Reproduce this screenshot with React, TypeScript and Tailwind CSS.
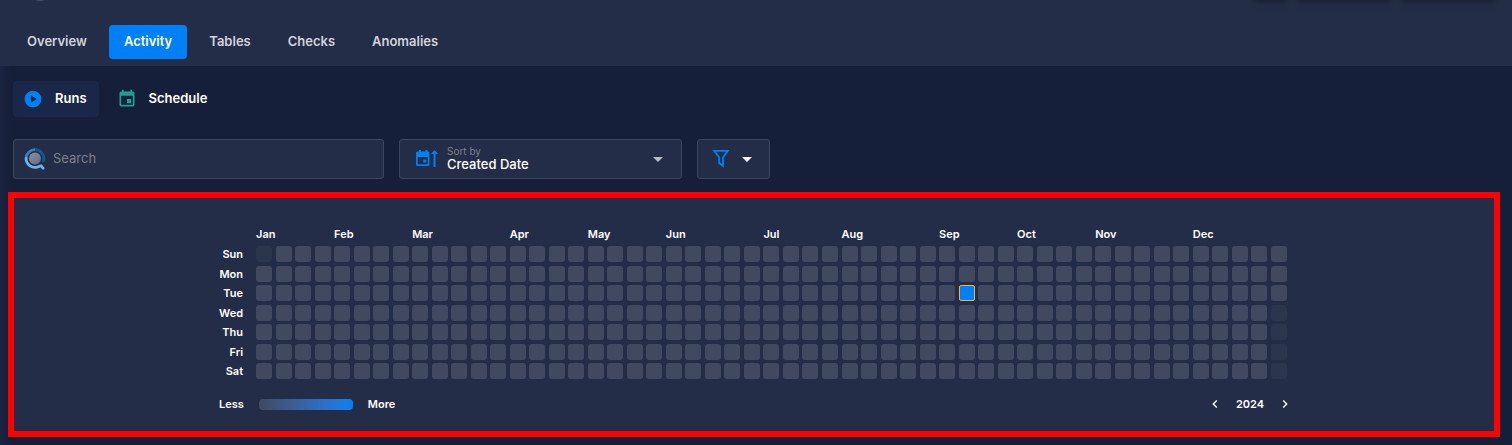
import { useState } from "react";
import type { ReactNode } from "react";
import { MdEvent, MdPlayCircle, MdArrowDropDown, MdChevronLeft, MdChevronRight } from "react-icons/md";

const tabs = ["Overview", "Activity", "Tables", "Checks", "Anomalies"];

const days = ["Sun", "Mon", "Tue", "Wed", "Thu", "Fri", "Sat"];

const months = [
  { name: "Jan", start: "col-start-1" },
  { name: "Feb", start: "col-start-5" },
  { name: "Mar", start: "col-start-9" },
  { name: "Apr", start: "col-start-14" },
  { name: "May", start: "col-start-18" },
  { name: "Jun", start: "col-start-22" },
  { name: "Jul", start: "col-start-27" },
  { name: "Aug", start: "col-start-31" },
  { name: "Sep", start: "col-start-36" },
  { name: "Oct", start: "col-start-40" },
  { name: "Nov", start: "col-start-44" },
  { name: "Dec", start: "col-start-49" },
];

const WEEKS = 53;

function cellClass(week: number, day: number) {
  if (week === 36 && day === 2) return "rounded-[2px] border border-[#f9b233] bg-[#0080f6]";
  const outside = (week === 0 && day === 0) || (week === WEEKS - 1 && day > 2);
  return outside ? "rounded-[3px] bg-[#2b354e]" : "rounded-[3px] bg-[#414960]";
}

function SearchLogo() {
  return (
    <svg viewBox="0 0 24 24" className="size-6 shrink-0" fill="none" aria-hidden="true">
      <defs>
        <linearGradient id="lens" x1="0" y1="0" x2="1" y2="1">
          <stop offset="0" stopColor="#8b93a3" />
          <stop offset="1" stopColor="#5c6c88" />
        </linearGradient>
      </defs>
      <circle cx="12" cy="11.500" r="6" fill="url(#lens)" />
      <path d="M12 2.700A8.900 8.900 0 0 1 20.200 15" stroke="#165a8c" strokeWidth="2.800" />
      <path d="M3.100 11.500A8.900 8.900 0 0 1 12 2.700" stroke="#3682bf" strokeWidth="2.800" />
      <path d="M3.100 11.500A8.900 8.900 0 0 0 15.400 19.700L18 18.700L20.200 21.300" stroke="#70b2ea" strokeWidth="2.800" strokeLinecap="round" strokeLinejoin="round" />
    </svg>
  );
}

function SortIcon() {
  return (
    <svg viewBox="0 0 24 20" className="h-5 w-6 shrink-0" fill="none" aria-hidden="true">
      <path
        d="M4 1V2.500H2.500A1.500 1.500 0 0 0 1 4V15.500A1.500 1.500 0 0 0 2.500 17H13A1.500 1.500 0 0 0 14.500 15.500V4A1.500 1.500 0 0 0 13 2.500H12.500V1H10.500V2.500H6V1ZM2.700 8H12.800V15.300H2.700ZM8.300 10.500H11.300V13.500H8.300Z"
        fill="#0080f6"
        fillRule="evenodd"
      />
      <path d="M19.500 18V3" stroke="#0080f6" strokeWidth="2" />
      <path d="M15.800 5L19.500 1L23.200 5Z" fill="#0080f6" />
    </svg>
  );
}

function FilterIcon() {
  return (
    <svg viewBox="0 0 18 20" className="h-5 w-[18px] shrink-0" fill="none" aria-hidden="true">
      <path d="M2.200 1.800H15.800L11 8.500V17L7.200 14V8.500Z" stroke="#0080f6" strokeWidth="1.800" />
    </svg>
  );
}

function SubTab({ active, icon, children }: { active?: boolean; icon: ReactNode; children: ReactNode }) {
  return (
    <a
      href="#"
      className={`flex h-9 items-center gap-3 rounded pr-3 pb-px pl-[10px] text-[13px] font-semibold text-white ${active ? "bg-[#1a2748]" : ""}`}
    >
      {icon}
      {children}
    </a>
  );
}

export default function App() {
  const [year, setYear] = useState(2024);
  const [tab, setTab] = useState("Activity");

  return (
    <div className="min-h-screen bg-[#161f39] font-['Inter',sans-serif] text-white">
      <header className="relative flex h-[66px] items-end overflow-hidden bg-[#232d47] pb-[7px] pl-3">
        <span className="absolute -top-[23px] left-7 size-6 rounded-full bg-[#434b60]" />
        <div className="absolute -top-9 right-4 flex gap-2">
          <span className="h-9 w-9 rounded shadow-md shadow-black/20" />
          <span className="h-9 w-24 rounded shadow-md shadow-black/20" />
          <span className="h-9 w-24 rounded shadow-md shadow-black/20" />
        </div>
        <nav className="flex gap-[7px]">
          {tabs.map((name) => (
            <button
              key={name}
              type="button"
              onClick={() => setTab(name)}
              className={`h-[34px] rounded px-[15px] text-[13px] font-semibold ${name === tab ? "bg-[#0080f6] text-white" : "text-[#d0d3da]"}`}
            >
              {name}
            </button>
          ))}
        </nav>
      </header>

      <main className="bg-linear-to-r from-[#1a2542] to-[#161f39] to-[10px] pt-[15px] pr-3 pb-2 pl-2">
        <nav className="flex gap-2 pl-[5px]">
          <SubTab active icon={<MdPlayCircle className="size-5 text-[#0080f6]" />}>
            Runs
          </SubTab>
          <SubTab icon={<MdEvent className="size-5 text-[#20a090]" />}>Schedule</SubTab>
        </nav>

        <div className="mt-[22px] flex gap-[15px] pl-[5px]">
          <label className="flex h-10 w-[371px] items-center gap-[6px] rounded-[3px] border border-[#3d465d] bg-[#232d47] px-[9px]">
            <SearchLogo />
            <input
              type="text"
              placeholder="Search"
              aria-label="Search"
              className="min-w-0 flex-1 bg-transparent text-[13px] text-white outline-none placeholder:text-[#7c808a]"
            />
          </label>
          <div className="flex h-10 w-[283px] items-center rounded-[3px] border border-[#3d465d] bg-[#232d47] pr-[11px] pl-[15px]">
            <SortIcon />
            <div className="ml-2 flex min-w-0 flex-1 flex-col">
              <label htmlFor="sort" className="text-[10px] leading-[10px] text-[#7c808a]">
                Sort by
              </label>
              <select id="sort" className="h-4 appearance-none bg-transparent text-[13px] leading-4 font-medium text-white outline-none">
                <option>Created Date</option>
              </select>
            </div>
            <MdArrowDropDown className="size-6 text-[#b9bdc6]" aria-hidden="true" />
          </div>
          <button
            type="button"
            aria-label="Filter"
            className="flex h-10 w-[73px] items-center justify-between rounded-[3px] border border-[#3d465d] bg-[#232d47] pr-[10px] pl-[14px]"
          >
            <FilterIcon />
            <MdArrowDropDown className="size-6 text-white" />
          </button>
        </div>

        <section className="mt-[13px] border-6 border-[#ff0000] bg-[#232d47] pt-7 pb-[19px]">
          <div className="mx-auto w-[1070px] text-[11px] leading-4 font-semibold">
            <div className="flex justify-end pr-[2px]">
              <div className="grid w-[1031px] grid-cols-[repeat(53,16px)] justify-between">
                {months.map((m) => (
                  <span key={m.name} className={`row-start-1 whitespace-nowrap ${m.start}`}>
                    {m.name}
                  </span>
                ))}
              </div>
            </div>
            <div className="mt-1 flex justify-end gap-[13px] pr-[2px]">
              <div className="flex h-[133px] flex-col justify-between text-right">
                {days.map((d) => (
                  <span key={d}>{d}</span>
                ))}
              </div>
              <div className="grid h-[133px] w-[1031px] grid-flow-col grid-cols-[repeat(53,16px)] grid-rows-[repeat(7,16px)] place-content-between">
                {Array.from({ length: WEEKS * 7 }, (_, i) => (
                  <span key={i} className={cellClass(Math.floor(i / 7), i % 7)} />
                ))}
              </div>
            </div>
            <div className="-mr-1 mt-[17px] flex items-center justify-between">
              <div className="flex items-center gap-[15px]">
                <span>Less</span>
                <span className="h-[11px] w-[94px] rounded bg-linear-to-r from-[#414960] to-[#0080f6]" />
                <span>More</span>
              </div>
              <div className="flex items-center gap-[13px]">
                <button type="button" aria-label="Previous year" onClick={() => setYear(year - 1)}>
                  <MdChevronLeft className="size-4" />
                </button>
                <span>{year}</span>
                <button type="button" aria-label="Next year" onClick={() => setYear(year + 1)}>
                  <MdChevronRight className="size-4" />
                </button>
              </div>
            </div>
          </div>
        </section>
      </main>
    </div>
  );
}
